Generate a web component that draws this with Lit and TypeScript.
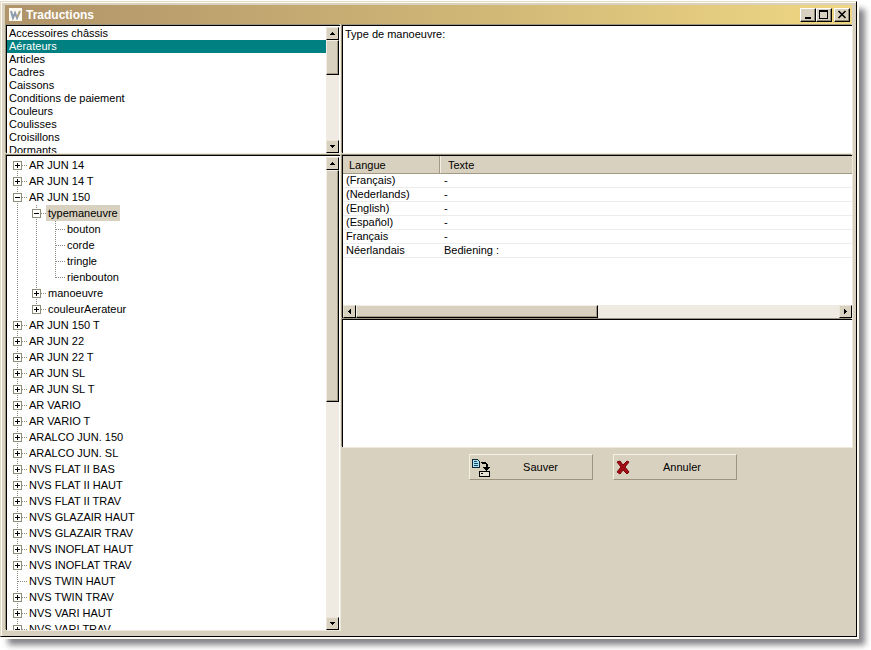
import { LitElement, html, svg, css, nothing } from "lit";
import { customElement, property, state } from "lit/decorators.js";
import { classMap } from "lit/directives/class-map.js";
import { styleMap } from "lit/directives/style-map.js";

interface TreeNode {
  label: string;
  children?: TreeNode[];
  expandable?: boolean;
}

const CATEGORIES = [
  "Accessoires châssis", "Aérateurs", "Articles", "Cadres", "Caissons",
  "Conditions de paiement", "Couleurs", "Coulisses", "Croisillons", "Dormants",
];

const closed = (label: string): TreeNode => ({ label, expandable: true });

const TREE: TreeNode[] = [
  closed("AR JUN 14"),
  closed("AR JUN 14 T"),
  {
    label: "AR JUN 150",
    expandable: true,
    children: [
      {
        label: "typemaneuvre",
        expandable: true,
        children: [
          { label: "bouton" }, { label: "corde" }, { label: "tringle" }, { label: "rienbouton" },
        ],
      },
      closed("manoeuvre"),
      closed("couleurAerateur"),
    ],
  },
  ...["AR JUN 150 T", "AR JUN 22", "AR JUN 22 T", "AR JUN SL", "AR JUN SL T", "AR VARIO",
    "AR VARIO T", "ARALCO JUN. 150", "ARALCO JUN. SL", "NVS FLAT II BAS", "NVS FLAT II HAUT",
    "NVS FLAT II TRAV", "NVS GLAZAIR HAUT", "NVS GLAZAIR TRAV", "NVS INOFLAT HAUT",
    "NVS INOFLAT TRAV"].map(closed),
  { label: "NVS TWIN HAUT" },
  closed("NVS TWIN TRAV"),
  closed("NVS VARI HAUT"),
  closed("NVS VARI TRAV"),
];

const TRANSLATIONS: [string, string][] = [
  ["(Français)", "-"],
  ["(Nederlands)", "-"],
  ["(English)", "-"],
  ["(Español)", "-"],
  ["Français", "-"],
  ["Néerlandais", "Bediening :"],
];

@customElement("scroll-bar")
export class ScrollBar extends LitElement {
  @property({ type: Boolean, reflect: true }) horizontal = false;
  @property({ type: Number }) size = 50;

  static styles = css`
    :host { display: flex; flex-direction: column; flex: none; width: 13px; background: #f0ebe2; }
    :host([horizontal]) { flex-direction: row; width: auto; height: 13px; }
    button {
      flex: none; display: grid; place-items: center; box-sizing: border-box;
      width: 13px; height: 13px; padding: 0; border: 1px solid;
      border-color: #ece5d8 #000 #000 #ece5d8; background: #d9d1bf;
    }
    .track { flex: 1; min-width: 0; min-height: 0; }
    .thumb {
      box-sizing: border-box; width: 100%; height: 100%; border: 1px solid;
      border-color: #f4efe5 #000 #000 #f4efe5; background: #d9d1bf;
      box-shadow: inset -1px -1px #a39a86;
    }
  `;

  private arrow(points: string, label: string) {
    return html`<button aria-label=${label}>
      <svg width="7" height="7" viewBox="0 0 7 7" shape-rendering="crispEdges"><path d=${points} /></svg>
    </button>`;
  }

  render() {
    const length = `${this.size}%`;
    return html`
      ${this.horizontal
        ? this.arrow("M4 1h1v5h-1zM3 2h1v3h-1zM2 3h1v1h-1z", "Gauche")
        : this.arrow("M3 2h1v1h-1zM2 3h3v1h-3zM1 4h5v1h-5z", "Haut")}
      <div class="track">
        <div class="thumb" style=${styleMap(this.horizontal ? { width: length } : { height: length })}></div>
      </div>
      ${this.horizontal
        ? this.arrow("M2 1h1v5h-1zM3 2h1v3h-1zM4 3h1v1h-1z", "Droite")
        : this.arrow("M1 2h5v1h-5zM2 3h3v1h-3zM3 4h1v1h-1z", "Bas")}
    `;
  }
}

@customElement("app-root")
export class AppRoot extends LitElement {
  @state() private selected = "typemaneuvre";

  static styles = css`
    :host {
      display: block; box-sizing: border-box; height: 100vh; min-height: 500px;
      padding: 1px 14px 13px 0; overflow: hidden; background: #fff;
      font: 11px/13px "Liberation Sans", Arial, sans-serif; color: #000;
    }
    .window {
      display: flex; flex-direction: column; box-sizing: border-box; height: 100%;
      padding: 3px 4px 6px; border: 1px solid; border-color: #e4dcc8 #000 #000 #e4dcc8;
      background: #d9d1bf;
      box-shadow: inset 1px 1px #fffdf2, 2px 2px #fffbee, 8px 8px 6px #85858a;
    }
    .title {
      flex: none; display: flex; align-items: center; height: 19px; padding: 0 2px 0 4px;
      background: linear-gradient(90deg, #b0946a, #d0b676 55%, #efd784);
      color: #fff;
    }
    h1 { flex: 1; margin: 0 0 0 4px; font-size: 12px; line-height: 14px; }
    .caption {
      display: grid; place-items: center; box-sizing: border-box; width: 16px; height: 14px; padding: 0;
      border: 1px solid; border-color: #fff #000 #000 #fff; background: #d9d1bf;
      box-shadow: inset -1px -1px #8f8672;
    }
    .close { margin-left: 2px; }
    .body {
      flex: 1; min-height: 0; display: grid; gap: 2px; margin: 1px 0 0 1px;
      grid-template-columns: 334fr 510fr; grid-template-rows: 128px minmax(0, 1fr);
    }
    .panel {
      display: flex; box-sizing: border-box; min-width: 0; min-height: 0; overflow: hidden;
      border: solid #000; border-width: 1px 0 0 1px; background: #fff;
      box-shadow: -1px -1px #9d947f, 1px 1px #efe9dc;
    }
    .inset { padding: 1px 1px 0 0; }
    select {
      flex: 1; min-width: 0; height: 100%; padding: 0; border: 0; border-radius: 0; outline: 0;
      overflow: hidden; scrollbar-width: none; background: #fff; font: inherit; color: #000;
    }
    option { min-height: 13px; padding: 0 2px; line-height: 13px; }
    option:checked { background: #008080 linear-gradient(#008080, #008080); color: #fff; }
    textarea {
      display: block; flex: 1; box-sizing: border-box; min-width: 0; height: 100%; margin: 0; padding: 2px 2px;
      border: 0; outline: 0; resize: none; background: #fff; font: inherit; color: #000;
    }
    .tree { flex: 1; min-width: 0; overflow: hidden; }
    ul { margin: 0; padding: 0 0 0 1px; list-style: none; }
    ul ul { padding: 0; }
    .row { display: flex; height: 16px; line-height: 16px; white-space: nowrap; }
    .row svg { flex: none; display: block; }
    .toggle { padding: 0; border: 0; background: none; }
    .label { padding: 0 2px; }
    .chosen { background: #d9d1bf; }
    .column { display: flex; flex-direction: column; gap: 1px; min-width: 0; }
    .grid { flex-direction: column; height: 163px; }
    .rows { flex: 1; min-height: 0; overflow: hidden; }
    .note { height: 128px; }
    table { width: 100%; border-collapse: separate; border-spacing: 0; table-layout: fixed; }
    .first { width: 97px; }
    th {
      box-sizing: border-box; height: 18px; padding: 2px 6px 0; border: solid #a39a86; border-width: 0 1px 1px 0;
      background: #d9d1bf; font-weight: 400; text-align: left;
    }
    th + th { padding-left: 8px; border-right: 0; box-shadow: inset 1px 0 #f4efe5; }
    td { height: 13px; padding: 0 3px; border-bottom: 1px solid #ececec; }
    td + td { padding-left: 4px; }
    .actions { display: flex; justify-content: center; gap: 20px; padding: 6px 0 0 12px; }
    .action {
      display: flex; align-items: center; box-sizing: border-box; width: 124px; height: 26px; padding: 0 2px;
      border: 1px solid; border-color: #f6f1e7 #9d947f #9d947f #f6f1e7;
      background: #d9d1bf; font: inherit; color: #000;
    }
    .action span { flex: 1; text-align: center; }
  `;

  private guide(kind: "pass" | "blank" | "node", last: boolean, first: boolean, node?: TreeNode) {
    const line = (x1: number, y1: number, x2: number, y2: number) =>
      svg`<path d="M${x1} ${y1}L${x2} ${y2}" stroke="#8a8a80" stroke-dasharray="1 1" />`;
    const box = svg`
      <rect x="5.5" y="4.5" width="8" height="8" fill="#fff" stroke="#8c8c78" />
      <path d=${node?.children ? "M7 8.5h5" : "M7 8.5h5M9.5 6v5"} stroke="#000" />`;
    return html`<svg width="19" height="16" viewBox="0 0 19 16" fill="none" shape-rendering="crispEdges" aria-hidden="true">
      ${kind === "pass" ? line(9.5, 0, 9.5, 16) : nothing}
      ${kind === "node"
        ? svg`${line(9.5, first ? 8 : 0, 9.5, last ? 9 : 16)}${line(10, 8.5, 19, 8.5)}${node?.expandable ? box : nothing}`
        : nothing}
    </svg>`;
  }

  private branch(nodes: TreeNode[], trail: boolean[]): unknown {
    return nodes.map((node, i) => {
      const last = i === nodes.length - 1;
      const own = this.guide("node", last, i === 0 && trail.length === 0, node);
      return html`<li role="treeitem">
        <div class="row">
          ${trail.map((more) => this.guide(more ? "pass" : "blank", false, false))}
          ${node.expandable ? html`<button class="toggle" aria-label=${node.label}>${own}</button>` : own}
          <span class=${classMap({ label: true, chosen: node.label === this.selected })}
            @click=${() => (this.selected = node.label)}>${node.label}</span>
        </div>
        ${node.children ? html`<ul role="group">${this.branch(node.children, [...trail, !last])}</ul>` : nothing}
      </li>`;
    });
  }

  render() {
    return html`
      <main class="window">
        <header class="title">
          <svg width="13" height="13" viewBox="0 0 13 13" aria-hidden="true">
            <rect width="13" height="13" fill="#fffaf0" />
            <path d="M2 3l2 7 2-5 2 5 3-7" fill="none" stroke="#8b9bb0" stroke-width="2" />
            <path d="M8 9l3-6" stroke="#e0a850" />
          </svg>
          <h1>Traductions</h1>
          <button class="caption" aria-label="Réduire">
            <svg width="12" height="10" shape-rendering="crispEdges"><path d="M3 7h6v2h-6z" /></svg>
          </button>
          <button class="caption" aria-label="Agrandir">
            <svg width="12" height="10" shape-rendering="crispEdges"><path fill-rule="evenodd" d="M1 0h9v9h-9zM2 2v6h7v-6z" /></svg>
          </button>
          <button class="caption close" aria-label="Fermer">
            <svg width="12" height="10"><path d="M2.500 1l7 7M9.500 1l-7 7" stroke="#000" stroke-width="1.600" /></svg>
          </button>
        </header>
        <div class="body">
          <section class="panel inset">
            <select size="10" aria-label="Catégories">
              ${CATEGORIES.map((c) => html`<option ?selected=${c === "Aérateurs"}>${c}</option>`)}
            </select>
            <scroll-bar .size=${35}></scroll-bar>
          </section>
          <section class="panel">
            <textarea aria-label="Description" .value=${"Type de manoeuvre:"}></textarea>
          </section>
          <section class="panel inset">
            <div class="tree"><ul role="tree">${this.branch(TREE, [])}</ul></div>
            <scroll-bar .size=${52}></scroll-bar>
          </section>
          <div class="column">
            <section class="panel grid">
              <div class="rows">
                <table>
                  <thead><tr><th class="first" scope="col">Langue</th><th scope="col">Texte</th></tr></thead>
                  <tbody>
                    ${TRANSLATIONS.map(([lang, text]) => html`<tr><td>${lang}</td><td>${text}</td></tr>`)}
                  </tbody>
                </table>
              </div>
              <scroll-bar horizontal .size=${50}></scroll-bar>
            </section>
            <section class="panel note"><textarea aria-label="Texte"></textarea></section>
            <div class="actions">
              <button class="action">
                <svg width="19" height="19" viewBox="0 0 19 19" fill="none" aria-hidden="true" shape-rendering="crispEdges">
                  <path d="M0.500 1.500h5l2 2v6h-7z" fill="#a8e4f4" stroke="#112233" />
                  <path d="M2 3.500h3M2 5.500h4M2 7.500h4" stroke="#124a66" />
                  <path d="M9 4h5v1h1v1h1v3h2v1h-1v1h-1v1h-1v1h-1v-1h-1v-1h-1v-1h-1v-1h3v-3h-4z" fill="#000" />
                  <path d="M7.500 13.500h10v5h-10z" fill="#e8e2d4" stroke="#000" />
                  <path d="M9 15.500h2" stroke="#000" />
                </svg>
                <span>Sauver</span>
              </button>
              <button class="action">
                <svg width="14" height="16" viewBox="0 0 14 16" aria-hidden="true">
                  <path d="M1 3l3-1 3 4 4-4 2 1-4 5 4 5-2 2-4-4-3 4-3-2 4-5z" fill="#a00d12" stroke="#7c0408" />
                </svg>
                <span>Annuler</span>
              </button>
            </div>
          </div>
        </div>
      </main>
    `;
  }
}
